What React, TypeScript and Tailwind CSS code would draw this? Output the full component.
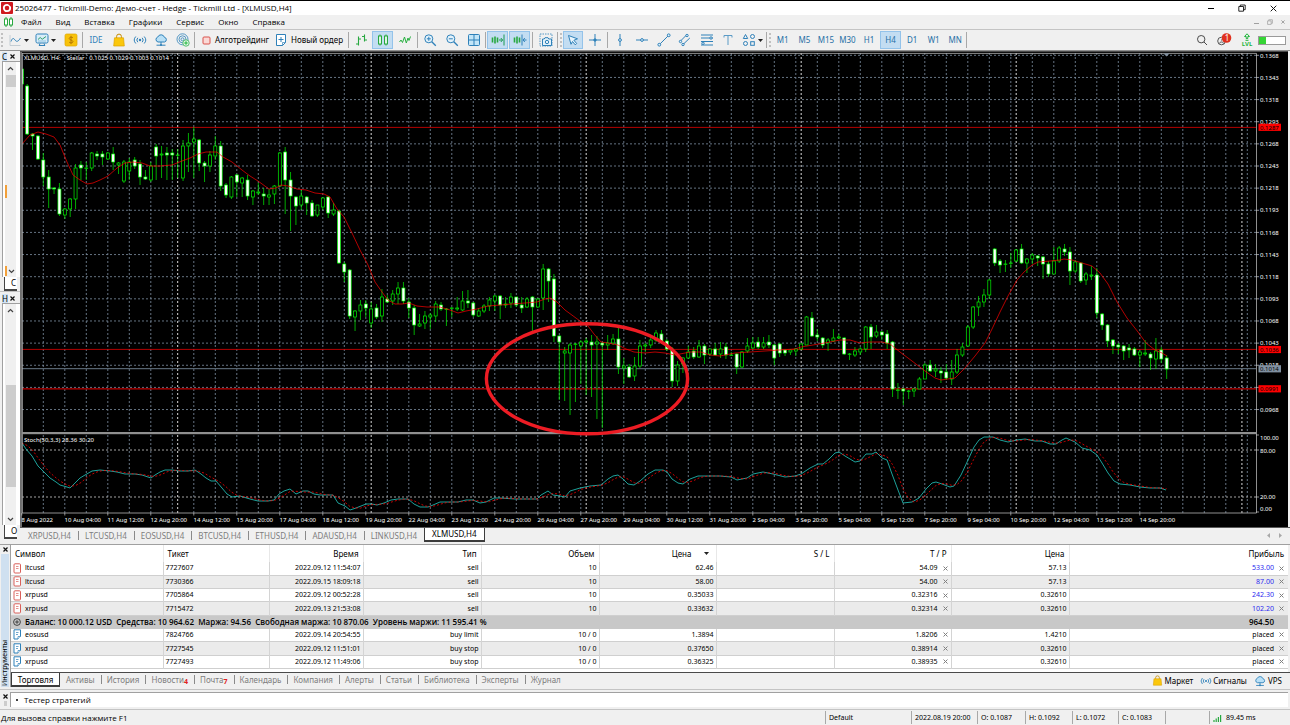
import type { ReactNode } from "react";

/* ---------- chart data ---------- */

type Kind = "w" | "h";
type Candle = [number, number, number, number, Kind];

// [high, body top, body bottom, low, kind] in plot units; w = falling, h = rising
const candles: Candle[] = [
  [69, 69, 84, 85, "w"], [84, 86, 134, 135, "w"], [133, 134, 136, 150, "w"], [135, 136, 159, 160, "w"],
  [153, 160, 177, 186, "w"], [170, 177, 189, 208, "w"], [187, 188, 189, 194, "w"], [183, 189, 214, 216, "w"],
  [208, 209, 215, 219, "h"], [198, 199, 209, 217, "h"], [164, 168, 199, 209, "h"], [161, 165, 168, 180, "w"],
  [162, 168, 168, 180, "h"], [152, 153, 168, 171, "h"], [151, 154, 156, 160, "w"], [151, 154, 157, 165, "w"],
  [152, 153, 159, 160, "h"], [147, 154, 162, 170, "w"], [162, 163, 165, 174, "h"], [160, 162, 181, 183, "h"],
  [158, 162, 171, 180, "h"], [157, 160, 166, 169, "w"], [160, 164, 177, 185, "w"], [170, 177, 179, 180, "w"],
  [162, 166, 180, 182, "h"], [144, 147, 156, 180, "w"], [146, 154, 155, 178, "h"], [147, 153, 155, 180, "w"],
  [149, 153, 155, 180, "w"], [149, 155, 155, 178, "h"], [140, 146, 178, 181, "h"], [133, 143, 146, 172, "h"],
  [127, 139, 142, 178, "h"], [139, 140, 163, 171, "w"], [161, 163, 166, 182, "w"], [151, 155, 166, 172, "h"],
  [136, 146, 156, 160, "h"], [141, 146, 186, 191, "w"], [183, 185, 195, 198, "w"], [176, 177, 197, 199, "h"],
  [174, 175, 182, 197, "w"], [177, 178, 183, 197, "h"], [175, 180, 196, 200, "w"], [190, 191, 197, 205, "h"],
  [183, 192, 193, 195, "h"], [188, 194, 196, 205, "w"], [189, 195, 197, 205, "h"], [185, 186, 194, 204, "h"],
  [152, 153, 186, 187, "h"], [147, 152, 180, 214, "w"], [172, 180, 196, 231, "w"], [196, 197, 206, 225, "w"],
  [190, 196, 205, 210, "h"], [196, 197, 203, 215, "w"], [200, 203, 216, 217, "w"], [205, 205, 215, 217, "h"],
  [197, 198, 207, 210, "h"], [196, 197, 213, 218, "w"], [203, 210, 214, 216, "h"], [210, 211, 263, 264, "w"],
  [262, 264, 272, 282, "w"], [269, 270, 316, 319, "w"], [310, 311, 317, 331, "h"], [300, 305, 311, 320, "h"],
  [300, 304, 308, 317, "w"], [302, 309, 323, 328, "h"], [304, 308, 317, 319, "w"], [289, 297, 316, 322, "h"],
  [295, 299, 302, 303, "w"], [290, 294, 301, 305, "h"], [282, 288, 294, 304, "h"], [282, 288, 301, 304, "w"],
  [298, 302, 308, 318, "w"], [305, 308, 325, 335, "w"], [314, 324, 326, 327, "h"], [311, 316, 323, 329, "h"],
  [313, 315, 317, 329, "h"], [301, 304, 316, 322, "h"], [302, 305, 309, 311, "w"], [308, 309, 309, 326, "h"],
  [307, 308, 308, 317, "h"], [297, 308, 309, 311, "h"], [291, 301, 310, 311, "h"], [290, 301, 303, 308, "w"],
  [302, 303, 315, 317, "w"], [308, 311, 316, 317, "h"], [304, 306, 311, 313, "h"], [297, 300, 306, 311, "h"],
  [295, 296, 301, 311, "h"], [295, 296, 305, 319, "w"], [297, 304, 305, 308, "h"], [293, 297, 303, 308, "h"],
  [297, 297, 305, 307, "w"], [297, 305, 308, 313, "w"], [297, 299, 307, 308, "h"], [296, 297, 307, 333, "w"],
  [298, 299, 307, 308, "h"], [264, 269, 298, 310, "h"], [268, 269, 281, 302, "w"], [274, 279, 336, 342, "w"],
  [335, 336, 342, 400, "w"], [347, 351, 353, 401, "h"], [343, 345, 353, 415, "h"], [343, 344, 344, 402, "h"],
  [340, 342, 346, 384, "h"], [338, 341, 342, 395, "h"], [335, 342, 345, 397, "w"], [336, 342, 344, 419, "h"],
  [342, 343, 345, 428, "w"], [335, 343, 345, 350, "h"], [334, 339, 343, 345, "h"], [328, 339, 367, 374, "w"],
  [358, 366, 368, 384, "h"], [364, 367, 377, 378, "w"], [357, 366, 376, 381, "h"], [340, 346, 366, 368, "h"],
  [343, 345, 346, 352, "h"], [335, 340, 345, 348, "h"], [330, 333, 340, 342, "h"], [330, 334, 342, 344, "w"],
  [339, 341, 349, 351, "w"], [347, 349, 381, 387, "w"], [361, 365, 381, 386, "h"], [357, 358, 364, 373, "h"],
  [346, 352, 358, 359, "h"], [347, 351, 357, 359, "w"], [340, 346, 357, 358, "h"], [344, 346, 355, 364, "w"],
  [348, 349, 354, 356, "h"], [343, 349, 355, 356, "w"], [342, 349, 354, 358, "h"], [343, 347, 355, 359, "w"],
  [352, 355, 355, 356, "h"], [353, 354, 367, 374, "w"], [351, 352, 367, 368, "h"], [338, 346, 351, 353, "h"],
  [337, 343, 348, 349, "h"], [337, 342, 347, 349, "w"], [337, 343, 347, 349, "h"], [335, 342, 345, 348, "w"],
  [344, 345, 358, 365, "w"], [343, 344, 353, 357, "w"], [349, 350, 353, 356, "w"], [349, 350, 352, 355, "h"],
  [348, 349, 351, 356, "h"], [343, 344, 349, 350, "h"], [316, 317, 345, 345, "h"], [312, 318, 336, 337, "w"],
  [329, 335, 337, 341, "w"], [337, 338, 345, 348, "w"], [338, 340, 343, 351, "h"], [329, 338, 341, 342, "h"],
  [334, 337, 338, 339, "h"], [337, 338, 354, 355, "w"], [353, 354, 354, 360, "h"], [347, 351, 355, 357, "h"],
  [347, 349, 352, 355, "h"], [326, 327, 349, 352, "h"], [324, 327, 337, 349, "w"], [325, 332, 336, 338, "h"],
  [331, 332, 335, 340, "w"], [330, 334, 343, 349, "w"], [341, 342, 389, 397, "w"], [383, 390, 390, 399, "h"],
  [388, 389, 391, 405, "w"], [390, 391, 391, 399, "h"], [388, 389, 391, 397, "h"], [377, 379, 389, 389, "h"],
  [363, 365, 379, 379, "h"], [360, 365, 371, 372, "w"], [364, 369, 371, 377, "h"], [367, 371, 373, 383, "w"],
  [364, 372, 378, 380, "w"], [360, 372, 379, 385, "h"], [349, 355, 372, 374, "h"], [343, 347, 355, 357, "h"],
  [325, 327, 346, 347, "h"], [306, 307, 327, 329, "h"], [296, 302, 307, 316, "h"], [289, 295, 302, 307, "h"],
  [279, 280, 295, 299, "h"], [248, 249, 263, 266, "w"], [259, 261, 265, 273, "w"], [260, 264, 264, 272, "h"],
  [253, 263, 263, 268, "h"], [249, 250, 261, 262, "h"], [244, 249, 263, 264, "w"], [258, 259, 263, 273, "h"],
  [253, 255, 259, 264, "h"], [255, 256, 258, 266, "w"], [256, 257, 264, 279, "w"], [261, 264, 274, 277, "w"],
  [247, 261, 274, 274, "h"], [246, 248, 261, 263, "h"], [244, 249, 252, 256, "w"], [247, 252, 271, 285, "w"],
  [260, 262, 271, 273, "h"], [262, 263, 281, 283, "w"], [272, 274, 280, 285, "h"], [266, 275, 276, 280, "h"],
  [268, 275, 313, 318, "w"], [313, 314, 325, 330, "w"], [324, 325, 341, 347, "w"], [339, 340, 346, 354, "w"],
  [343, 345, 347, 354, "w"], [345, 346, 351, 360, "w"], [344, 348, 350, 358, "w"], [347, 349, 355, 356, "w"],
  [350, 352, 355, 367, "h"], [340, 353, 354, 356, "h"], [352, 354, 358, 370, "w"], [338, 351, 359, 369, "h"],
  [347, 350, 359, 363, "w"], [355, 358, 369, 379, "w"],
];

type Point = [number, number];

const average: Point[] = [
  [22, 144], [30, 135], [38, 132], [46, 134], [54, 137], [60, 145], [67, 162], [73, 175], [80, 180], [87, 184], [93, 183],
  [100, 180], [108, 176], [117, 168], [125, 163], [133, 162], [142, 163], [150, 166], [160, 166], [172, 165], [182, 161],
  [190, 158], [198, 154], [206, 152], [217, 152], [223, 157], [232, 162], [242, 170], [250, 176], [258, 181], [269, 189],
  [276, 188], [281, 185], [288, 186], [297, 189], [306, 190], [315, 193], [324, 194], [330, 197], [337, 209], [344, 217],
  [352, 233], [360, 250], [368, 265], [375, 282], [382, 292], [388, 300], [395, 304], [402, 304], [409, 303], [417, 306],
  [427, 307], [440, 307], [450, 310], [458, 313], [466, 311], [477, 309], [488, 306], [500, 305], [512, 304], [525, 303],
  [537, 302], [545, 299], [550, 298], [557, 302], [565, 310], [580, 321], [588, 326], [594, 334], [601, 342], [608, 343],
  [618, 345], [626, 349], [634, 352], [645, 353], [655, 352], [665, 353], [675, 355], [690, 352], [701, 352], [710, 355],
  [720, 356], [735, 353], [750, 352], [765, 351], [780, 350], [795, 349], [801, 347], [813, 345], [830, 342], [840, 340],
  [850, 340], [860, 343], [870, 342], [882, 342], [890, 344], [900, 352], [912, 361], [925, 371], [935, 378], [941, 380],
  [948, 379], [955, 378], [965, 368], [975, 356], [985, 343], [992, 329], [1000, 312], [1008, 296], [1017, 280],
  [1024, 272], [1032, 265], [1038, 262], [1050, 261], [1060, 260], [1064, 259], [1072, 260], [1082, 263], [1092, 266],
  [1100, 273], [1108, 284], [1117, 302], [1127, 318], [1138, 332], [1146, 343], [1155, 350], [1162, 353], [1167, 356],
];

const stochastic: Point[] = [
  [22, 443], [26, 449], [32, 456], [38, 466], [44, 472], [50, 478], [56, 482], [60, 485], [67, 487], [70, 488], [74, 484],
  [80, 478], [85, 475], [92, 471], [100, 470], [110, 471], [117, 472], [125, 474], [135, 474], [142, 475], [151, 478],
  [155, 475], [160, 472], [165, 470], [172, 470], [180, 471], [188, 471], [195, 470], [201, 474], [206, 478], [211, 481],
  [216, 481], [222, 488], [227, 494], [232, 497], [240, 496], [250, 499], [258, 501], [268, 501], [274, 500], [279, 494],
  [284, 491], [290, 489], [296, 494], [303, 491], [308, 491], [314, 494], [320, 495], [333, 495], [338, 503], [345, 506],
  [350, 510], [356, 508], [366, 504], [372, 504], [377, 505], [384, 503], [391, 500], [398, 499], [408, 499], [414, 504],
  [420, 507], [428, 507], [433, 505], [440, 502], [450, 502], [458, 502], [466, 500], [473, 500], [480, 503], [486, 502],
  [494, 498], [500, 498], [515, 499], [537, 499], [541, 495], [548, 491], [553, 495], [560, 496], [565, 497], [570, 491],
  [580, 488], [590, 486], [601, 485], [608, 479], [613, 476], [618, 475], [623, 479], [628, 484], [634, 485], [640, 481],
  [648, 474], [655, 470], [663, 470], [667, 472], [672, 479], [678, 483], [683, 484], [690, 479], [698, 476], [712, 476],
  [720, 476], [731, 477], [737, 480], [747, 478], [753, 474], [763, 472], [773, 474], [785, 477], [795, 476], [801, 474],
  [810, 468], [818, 464], [823, 464], [829, 459], [835, 453], [839, 452], [845, 456], [855, 462], [860, 461], [866, 454],
  [872, 454], [876, 452], [882, 458], [887, 460], [892, 474], [898, 490], [903, 503], [912, 502], [919, 498], [926, 489],
  [932, 483], [936, 482], [942, 484], [950, 487], [954, 486], [961, 475], [968, 460], [974, 447], [979, 440], [984, 437],
  [993, 437], [1000, 440], [1008, 442], [1017, 440], [1025, 439], [1035, 441], [1042, 441], [1050, 444], [1056, 444],
  [1062, 440], [1066, 438], [1075, 442], [1082, 448], [1090, 450], [1097, 455], [1102, 463], [1108, 473], [1114, 481],
  [1120, 484], [1130, 485], [1140, 487], [1150, 488], [1160, 488], [1166, 490],
];

const STEP = 5.375;
const ORIGIN = 21.8;
const barX = (i: number) => ORIGIN + STEP * i;

function valueAt(points: Point[], x: number) {
  if (x <= points[0][0]) return points[0][1];
  for (let i = 1; i < points.length; i++) {
    const [x1, y1] = points[i];
    const [x0, y0] = points[i - 1];
    if (x <= x1) return y0 + ((y1 - y0) * (x - x0)) / (x1 - x0);
  }
  return points[points.length - 1][1];
}

// three-bar simple average of the main stochastic line
const signal: Point[] = candles.map((_, i) => {
  const at = (n: number) => valueAt(stochastic, barX(Math.max(0, n)));
  return [barX(i), (at(i) + at(i - 1) + at(i - 2)) / 3];
});

const toPath = (points: Point[]) => points.map((p) => p.join(",")).join(" ");

const priceLabels = [
  "0.1368", "0.1343", "0.1318", "0.1293", "0.1268", "0.1243", "0.1218", "0.1193", "0.1168",
  "0.1143", "0.1118", "0.1093", "0.1068", "0.1043", "0.1018", "0.0993", "0.0968",
];

const dateLabels = [
  "8 Aug 2022", "10 Aug 04:00", "11 Aug 12:00", "12 Aug 20:00", "14 Aug 12:00", "15 Aug 20:00", "17 Aug 04:00",
  "18 Aug 12:00", "19 Aug 20:00", "22 Aug 04:00", "23 Aug 12:00", "24 Aug 20:00", "26 Aug 04:00", "27 Aug 20:00",
  "29 Aug 04:00", "30 Aug 12:00", "31 Aug 20:00", "2 Sep 04:00", "3 Sep 20:00", "5 Sep 04:00", "6 Sep 12:00",
  "7 Sep 20:00", "9 Sep 04:00", "10 Sep 20:00", "12 Sep 04:00", "13 Sep 12:00", "14 Sep 20:00",
];

const priceMarks = [
  { y: 127.3, label: "0.1287", color: "#ff0000" },
  { y: 349.5, label: "0.1036", color: "#ff0000" },
  { y: 368.8, label: "0.1014", color: "#8090a0" },
  { y: 388.8, label: "0.0991", color: "#ff0000" },
];

const gridY = (k: number) => 55.3 + 22.14 * k;

function Chart() {
  return (
    <svg viewBox="20 51 1270 476" className="block h-auto w-full bg-black font-['Noto_Sans','Open_Sans',sans-serif] text-[6px]" role="img" aria-label="XLMUSD, H4">
      <g stroke="#778899" strokeWidth="0.85" strokeDasharray="2 2">
        {Array.from({ length: 57 }, (_, k) => (
          <path key={k} d={`M${barX(4 * k + 4)} 53V432M${barX(4 * k + 4)} 435V513`} />
        ))}
        {priceLabels.map((label, k) => (
          <path key={label} d={`M22 ${gridY(k)}H1256`} />
        ))}
      </g>
      <g stroke="#ffffff" strokeWidth="0.85" strokeDasharray="2 2">
        {[29, 65, 105, 145, 185, 227].map((i) => (
          <path key={i} d={`M${barX(i)} 53V432M${barX(i)} 435V513`} />
        ))}
        <path d="M22 450H1256M22 497H1256" stroke="#c0c0c0" />
      </g>
      <path d="M22 127.4H1256M22 349.4H1256" stroke="#e00000" strokeWidth="0.8" />
      <path d="M22 388.8H1256" stroke="#c00000" strokeWidth="1.2" />
      <path d="M22 368.7H1256" stroke="#778899" strokeWidth="0.9" />
      <g stroke="#00ff00" strokeWidth="0.67">
        {candles.map(([high, top, bottom, low, kind], i) => (
          <g key={i}>
            <path d={`M${barX(i)} ${high}V${low}`} />
            <rect x={barX(i) - 1.5} y={top} width="3" height={Math.max(bottom - top, 0.6)} fill={kind === "w" ? "#ffffff" : "#000000"} />
          </g>
        ))}
      </g>
      <polyline points={toPath(average)} fill="none" stroke="#ff0000" strokeWidth="0.7" />
      <polyline points={toPath(stochastic)} fill="none" stroke="#20b2aa" strokeWidth="0.9" />
      <polyline points={toPath(signal)} fill="none" stroke="#ff0000" strokeWidth="0.8" strokeDasharray="2 2" />
      <rect x="20" y="51" width="2" height="476" fill="#6e6e6e" />
      <rect x="20" y="51" width="1270" height="1" fill="#4a4a4a" />
      <rect x="1288" y="51" width="2" height="476" fill="#f0f0f0" />
      <path d="M22.4 53V513M22 53.4H1256.5V513H22" fill="none" stroke="#b4b4b4" strokeWidth="0.8" />
      <rect x="22" y="432" width="1235" height="2.2" fill="#909090" />
      <path d="M1163.5 53.5h6l-3 3z" fill="#8090a0" />
      <g stroke="#c8c8c8" strokeWidth="0.7">
        {priceLabels.map((label, k) => (
          <path key={label} d={`M1256 ${gridY(k)}h3`} />
        ))}
        {dateLabels.map((label, k) => (
          <path key={label} d={`M${barX(8 * k)} 513v2.5`} />
        ))}
        <path d="M1256 435h3M1256 450h3M1256 497h3M1256 512h3" />
      </g>
      <g fill="#ffffff">
        {priceLabels.map((label, k) => (
          <text key={label} x="1260" y={gridY(k) + 2.2}>{label}</text>
        ))}
        {dateLabels.map((label, k) => (
          <text key={label} x={barX(8 * k) - 0.3} y="521.5">{label}</text>
        ))}
        <text x="1260" y="439.5">100.00</text>
        <text x="1260" y="452.5">80.00</text>
        <text x="1260" y="499.3">20.00</text>
        <text x="1260" y="511.3">0.00</text>
        <text x="24" y="60">XLMUSD, H4:&#160;&#160;&#160; Stellar&#160;&#160; 0.1025 0.1029 0.1003 0.1014</text>
        <text x="24" y="442.3">Stoch(50,3,3) 28.36 30.20</text>
      </g>
      {priceMarks.map((mark) => (
        <g key={mark.label}>
          <rect x="1258.5" y={mark.y - 3.6} width="22.5" height="7.2" fill={mark.color} />
          <text x="1260" y={mark.y + 2.2} fill="#000000">{mark.label}</text>
        </g>
      ))}
      <ellipse cx="587" cy="378.8" rx="100.6" ry="55" fill="none" stroke="#ed1c24" strokeWidth="3.4" />
    </svg>
  );
}

/* ---------- icons ---------- */

function Svg({ children, size = "h-[14px] w-[14px]", box = "0 0 14 14" }: { children: ReactNode; size?: string; box?: string }) {
  return (
    <svg viewBox={box} className={`${size} shrink-0`} fill="none" stroke="#2f81b9" strokeWidth="1" aria-hidden="true">
      {children}
    </svg>
  );
}

const LineIcon = () => (
  <Svg>
    <path d="M2 2v10.5h10.5" stroke="#b9c4cc" strokeWidth="0.8" />
    <path d="M3 8.5C4.5 4.5 5.5 5 7 7s3 2 5.5-2" />
  </Svg>
);
const MonitorIcon = () => (
  <Svg>
    <rect x="1" y="1" width="12" height="9" rx="1.5" fill="#d9edf8" />
    <path d="M3 6.5l2.2-2 2 1.8L11 3.5" stroke="#2e9e6a" />
    <path d="M3 8h8" stroke="#8fc3e0" />
    <path d="M4 12.5h6M5 10.5l-.8 2M9 10.5l.8 2" />
  </Svg>
);
const CoinIcon = () => (
  <Svg>
    <rect x="1" y="1" width="12" height="12" rx="1.5" fill="#f8c20a" stroke="#e0a800" strokeWidth="0.7" />
    <path d="M9 4.8C8.4 4 5.2 3.8 5.2 5.5S9 7 9 8.700S5.500 10 5 9M7 2.800v8.400" stroke="#b07200" strokeWidth="0.9" />
  </Svg>
);
const BagIcon = ({ size }: { size?: string }) => (
  <Svg size={size}>
    <path d="M4.600 5V3.500a2.400 2.400 0 014.800 0V5" stroke="#c48a00" />
    <path d="M2.500 4.800h9L12.300 13H1.700z" fill="#fbc70c" stroke="#dba200" strokeWidth="0.7" />
  </Svg>
);
const SignalIcon = ({ size }: { size?: string }) => (
  <Svg size={size}>
    <circle cx="7" cy="7" r="1.200" fill="#2f81b9" stroke="none" />
    <path d="M4.800 4.800a3.200 3.200 0 000 4.400M9.200 4.800a3.200 3.200 0 010 4.400M2.800 3.500a5.200 5.200 0 000 7M11.200 3.500a5.200 5.200 0 010 7" />
  </Svg>
);
const CloudIcon = ({ size }: { size?: string }) => (
  <Svg size={size}>
    <path d="M4 9a2.600 2.600 0 01-.2-5A3.500 3.500 0 0110.400 4.300 2.400 2.400 0 0110.500 9z" fill="#b9e0f6" />
    <path d="M7 9v3M2.500 12.200h9" />
    <circle cx="7" cy="12" r="1" fill="#2f81b9" stroke="none" />
  </Svg>
);
const TargetIcon = () => (
  <Svg>
    <circle cx="6.500" cy="6.300" r="5.500" strokeWidth="0.800" />
    <circle cx="6.500" cy="6.300" r="3.500" strokeWidth="0.800" />
    <circle cx="6.500" cy="6.300" r="1.500" strokeWidth="0.800" />
    <circle cx="10" cy="10" r="3.200" fill="#e9faec" stroke="#2fae4b" strokeWidth="0.800" />
    <path d="M8.200 10h3.600M10 8.200v3.600" stroke="#1fb43c" />
  </Svg>
);
const StopIcon = () => (
  <Svg size="h-[9px] w-[9px]" box="0 0 9 9">
    <rect x="1" y="1" width="7" height="7" rx="1" fill="#fbd9d6" stroke="#d9534c" />
  </Svg>
);
const OrderIcon = () => (
  <Svg>
    <path d="M2.500 1.500h9v8l-3 3h-6z" fill="#ffffff" />
    <path d="M7 4v5M4.500 6.500h5" />
    <path d="M8.500 12.500v-3h3" strokeWidth="0.700" />
  </Svg>
);
const BarsIcon = () => (
  <Svg>
    <path d="M4.500 3.500v9M2 11h2.500M4.500 6H7M10.500 1.500v7M8 3.500h2.500M10.500 7H13" stroke="#27a83f" strokeWidth="1.100" />
  </Svg>
);
const CandlesIcon = () => (
  <Svg>
    <path d="M4 1.500v11M10 1.500v11" stroke="#27a83f" />
    <rect x="2.500" y="3" width="3" height="8" fill="#dff5e3" stroke="#27a83f" />
    <rect x="8.500" y="3" width="3" height="8" fill="#dff5e3" stroke="#27a83f" />
  </Svg>
);
const ZigzagIcon = () => (
  <Svg>
    <path d="M1.500 9l1.500-2 1.500 2.500L6.500 4l1.800 6L10 5l1 2.500L12.500 3.500" stroke="#27b040" />
  </Svg>
);
const ZoomIcon = ({ plus }: { plus?: boolean }) => (
  <Svg>
    <circle cx="5.800" cy="5.800" r="4" fill="#e3f2fb" />
    <path d="M8.800 8.800l4 4" strokeWidth="1.300" />
    <path d={plus ? "M3.800 5.800h4M5.800 3.800v4" : "M3.800 5.800h4"} />
  </Svg>
);
const TilesIcon = () => (
  <Svg>
    <rect x="1.500" y="1.500" width="11" height="11" rx="1" fill="#c4e6f8" />
    <path d="M7 1.500v11M1.500 7h11" />
  </Svg>
);
const ScrollIcon = ({ shift }: { shift?: boolean }) => (
  <Svg>
    <path d="M1.500 4.500v5M4 3.500v7M6.500 4.500v5" stroke="#27a83f" strokeWidth="1.600" />
    {shift ? <path d="M9 1.500v11M13.500 7H10M11.800 5L10 7l1.800 2" /> : <path d="M13 1.500v11M8 7h3.500M9.800 5l1.800 2-1.800 2" stroke="#1c9a52" />}
  </Svg>
);
const CameraIcon = () => (
  <Svg>
    <rect x="1" y="1" width="12" height="12" strokeDasharray="1.500 1" strokeWidth="0.800" />
    <path d="M3.500 6h1.700l.8-1.300h3L9.800 6h2.700v6.500h-9z" fill="#e3f2fb" />
    <circle cx="8" cy="9" r="1.700" />
  </Svg>
);
const CursorIcon = () => (
  <Svg>
    <path d="M2.500 2.500l9 3.300-3.600 1.500 2.800 3.200-1.500 1.300-2.700-3.300-1.500 2.800z" fill="#e8f5fd" />
  </Svg>
);
const CrossIcon = () => (
  <Svg>
    <path d="M7 1v12M1 7h12" />
    <path d="M5.500 7h3M7 5.500v3" strokeWidth="2" />
  </Svg>
);
const VLineIcon = () => (
  <Svg>
    <path d="M7 1v12" />
    <circle cx="7" cy="7" r="1.400" fill="#e3f2fb" />
  </Svg>
);
const HLineIcon = () => (
  <Svg>
    <path d="M1 7h12" />
    <circle cx="7" cy="7" r="1.400" fill="#e3f2fb" />
  </Svg>
);
const TrendIcon = () => (
  <Svg>
    <path d="M2.800 11.200l8.400-8.400" />
    <circle cx="2.300" cy="11.700" r="1.400" fill="#e3f2fb" />
    <circle cx="11.700" cy="2.300" r="1.400" fill="#e3f2fb" />
  </Svg>
);
const ChannelIcon = () => (
  <Svg>
    <path d="M2 8.500L8.500 2M5 11.500L11.800 5" />
    <circle cx="9" cy="2.500" r="1.200" fill="#e3f2fb" />
    <circle cx="2.500" cy="8.500" r="1.200" fill="#e3f2fb" />
    <circle cx="5" cy="11.500" r="1.200" fill="#e3f2fb" />
  </Svg>
);
const LevelsIcon = () => (
  <Svg>
    <path d="M1 2h12M1 5h12M1 8.500h12M1 12h12" />
    <circle cx="11" cy="5" r="1.200" fill="#e3f2fb" />
    <circle cx="3" cy="10.300" r="1.200" fill="#e3f2fb" />
  </Svg>
);
const LetterIcon = () => (
  <Svg>
    <path d="M3 4.500V2.500h8v2M7 2.500V12" stroke="#5b9bc6" />
  </Svg>
);
const ShapesIcon = () => (
  <Svg>
    <path d="M3.500 1.500l2.200 4H1.300z" />
    <circle cx="10.500" cy="3.500" r="2" />
    <circle cx="3.500" cy="10.500" r="2" />
    <rect x="8.700" y="8.700" width="3.600" height="3.600" />
  </Svg>
);
const SearchIcon = () => (
  <Svg>
    <circle cx="6.200" cy="6.200" r="3.700" stroke="#4a4a4a" />
    <path d="M9 9l3 3" stroke="#4a4a4a" />
  </Svg>
);
const UserIcon = () => (
  <Svg size="h-[14px] w-[18px]" box="0 0 18 14">
    <circle cx="6.500" cy="8" r="3.800" stroke="#555555" />
    <path d="M4.500 10.500c0-2 4-2 4 0M6.500 6.500v1" stroke="#555555" />
    <circle cx="11.500" cy="5" r="4.800" fill="#e0301e" stroke="none" />
    <text x="9.700" y="7.700" fontSize="8" fill="#ffffff" stroke="none">1</text>
  </Svg>
);
const Caret = () => (
  <svg viewBox="0 0 5 3" className="h-[3px] w-[5px] shrink-0" aria-hidden="true">
    <path d="M0 0h5L2.500 3z" fill="#222222" />
  </svg>
);
const Chevron = ({ down }: { down?: boolean }) => (
  <svg viewBox="0 0 7 5" className="h-[5px] w-[7px]" fill="none" stroke="#444444" strokeWidth="1.200" aria-hidden="true">
    <path d={down ? "M1 1l2.500 2.500L6 1" : "M1 4l2.500-2.500L6 4"} />
  </svg>
);
const Cross = ({ color = "#111111", size = "h-[5px] w-[5px]", weight = "1.2" }: { color?: string; size?: string; weight?: string }) => (
  <svg viewBox="0 0 5 5" className={size} stroke={color} strokeWidth={weight} aria-hidden="true">
    <path d="M.5 .5l4 4M4.500 .5l-4 4" />
  </svg>
);
const DocIcon = ({ sell }: { sell?: boolean }) => (
  <svg viewBox="0 0 9 11" className="h-[11px] w-[9px] shrink-0" fill="#ffffff" stroke={sell ? "#d9605a" : "#2f81b9"} aria-hidden="true">
    {sell ? <rect x="1" y="0.800" width="6.500" height="9.200" rx="1" /> : <path d="M1 .8h6.500v6.400L5 10H1z" />}
    <path d={sell ? "M3 3.500h2.500M3 5.500h2.500" : "M3 3.500h2.500M3 5.500h2M5 10V7.500h2.500"} strokeWidth="0.700" />
  </svg>
);

/* ---------- toolbar ---------- */

const Sep = () => <span className="my-px w-[2px] shrink-0 border-l border-[#a8a8a8]" />;
const Grip = () => <span className="my-[2px] ml-px w-[3px] shrink-0 border-l-2 border-dotted border-[#c0c0c0]" />;

function Tool({ label, width = "w-[22px]", active, children }: { label: string; width?: string; active?: boolean; children: ReactNode }) {
  return (
    <button
      type="button"
      aria-label={label}
      aria-pressed={active}
      className={`flex shrink-0 items-center justify-center gap-[2px] border ${width} ${active ? "border-[#94c3ea] bg-[#c3ddf2]" : "border-transparent"}`}
    >
      {children}
    </button>
  );
}

const timeframes = ["M1", "M5", "M15", "M30", "H1", "H4", "D1", "W1", "MN"];

function Toolbar() {
  return (
    <div className="flex h-[22px] shrink-0 items-stretch border-y border-t-[#c4c4c4] border-b-[#909090] bg-[#f0f0f0] py-px">
      <Grip />
      <Tool label="Линия" width="w-[28px]"><LineIcon /><Caret /></Tool>
      <Tool label="Шаблоны" width="w-[27px]"><MonitorIcon /><Caret /></Tool>
      <Tool label="Символы" width="w-[23px]"><CoinIcon /></Tool>
      <Sep />
      <Tool label="IDE" width="w-[24px]"><span className="text-[8px] text-[#2f81b9]">IDE</span></Tool>
      <Tool label="Маркет" width="w-[21px]"><BagIcon /></Tool>
      <Tool label="Сигналы" width="w-[21px]"><SignalIcon /></Tool>
      <Tool label="VPS" width="w-[22px]"><CloudIcon /></Tool>
      <Tool label="Копирование"><TargetIcon /></Tool>
      <Sep />
      <button type="button" className="flex w-[77px] shrink-0 items-center gap-[4px] pl-[6px] text-[8px]"><StopIcon />Алготрейдинг</button>
      <button type="button" className="flex w-[75px] shrink-0 items-center gap-[3px] pl-px text-[8px]"><OrderIcon />Новый ордер</button>
      <Sep />
      <Tool label="Бары"><BarsIcon /></Tool>
      <Tool label="Свечи" width="w-[21px]" active><CandlesIcon /></Tool>
      <Tool label="Линейный график" width="w-[24px]"><ZigzagIcon /></Tool>
      <Sep />
      <Tool label="Увеличить"><ZoomIcon plus /></Tool>
      <Tool label="Уменьшить"><ZoomIcon /></Tool>
      <Tool label="Плитка"><TilesIcon /></Tool>
      <Sep />
      <Tool label="Автопрокрутка" width="w-[21px]" active><ScrollIcon /></Tool>
      <span className="w-px" />
      <Tool label="Сдвиг графика" width="w-[21px]" active><ScrollIcon shift /></Tool>
      <span className="w-[2px]" />
      <Sep />
      <Tool label="Снимок" width="w-[23px]"><CameraIcon /></Tool>
      <Sep />
      <Grip />
      <Tool label="Курсор" width="w-[20px]" active><CursorIcon /></Tool>
      <Tool label="Перекрестие" width="w-[24px]"><CrossIcon /></Tool>
      <Sep />
      <Tool label="Вертикальная линия"><VLineIcon /></Tool>
      <Tool label="Горизонтальная линия"><HLineIcon /></Tool>
      <Tool label="Трендовая линия" width="w-[21px]"><TrendIcon /></Tool>
      <Tool label="Канал"><ChannelIcon /></Tool>
      <Tool label="Уровни" width="w-[21px]"><LevelsIcon /></Tool>
      <Tool label="Текст" width="w-[21px]"><LetterIcon /></Tool>
      <Tool label="Объекты" width="w-[28px]"><ShapesIcon /><Caret /></Tool>
      <Sep />
      <Grip />
      <div className="grid w-[194px] shrink-0 grid-cols-9 text-[8px] text-[#1f6fa5]">
        {timeframes.map((frame) => (
          <button
            key={frame}
            type="button"
            className={`border text-center leading-none ${frame === "H4" ? "border-[#94c3ea] bg-[#c3ddf2]" : "border-transparent"}`}
          >
            {frame}
          </button>
        ))}
      </div>
      <Sep />
      <div className="ml-auto flex items-center gap-[4px] pr-[4px]">
        <button type="button" aria-label="Поиск" className="mr-[2px]"><SearchIcon /></button>
        <button type="button" aria-label="Уведомления" className="mr-[3px]"><UserIcon /></button>
        <span className="flex w-[14px] flex-col items-center text-[6px] leading-[6px] font-bold text-[#22b53c]">
          <svg viewBox="0 0 8 8" className="h-[8px] w-[8px]" fill="none" stroke="#22b53c" aria-hidden="true">
            <path d="M4 .8l2.500 2.700H4.800v2H3.200v-2H1.500zM2.500 7.300h3" />
          </svg>
          LVL
        </span>
        <span className="flex h-[9px] w-[28px] border border-[#9a9a9a] bg-white" aria-hidden="true">
          <span className="w-[7px] bg-[#35d435]" />
        </span>
      </div>
    </div>
  );
}

/* ---------- side panel ---------- */

function SidePane({ title, tab, grow, children }: { title: string; tab: string; grow?: boolean; children: ReactNode }) {
  return (
    <section className={`flex flex-col ${grow ? "min-h-0 flex-1 pb-[5px]" : "h-[240px] shrink-0"}`}>
      <header className="flex h-[10px] shrink-0 items-center pl-[2px]">
        <span className="bg-[#cfe2f5] text-[8px] leading-[9px]">{title}</span>
        <button type="button" aria-label="Закрыть" className="ml-auto pr-[5px]"><Cross /></button>
      </header>
      <div className="ml-[2px] flex min-h-0 flex-1 flex-col border-t border-l border-[#a0a0a0] bg-white">
        <div className="ml-[2px] flex min-h-0 w-[11px] flex-1 flex-col items-center bg-[#f0f0f0]">{children}</div>
      </div>
      <div className="ml-[4px] h-[14px] w-[13px] shrink-0 border-b-2 border-l border-[#444444] bg-white pl-[6px] text-[8px] leading-[12px]">{tab}</div>
    </section>
  );
}

function SidePanel() {
  return (
    <aside className="flex w-[20px] shrink-0 flex-col bg-[#f0f0f0]">
      <SidePane title="С" tab="C">
        <span className="flex h-[13px] items-center"><Chevron /></span>
        <span className="h-[12px] w-[10px] bg-[#cdcdcd]" />
        <span className="mt-[98px] h-[13px] w-[2px] self-start bg-[#f2a03a]" />
        <span className="mt-auto flex h-[12px] w-full items-center gap-px"><span className="h-[10px] w-[2px] bg-[#f2a03a]" /><Chevron down /></span>
      </SidePane>
      <span className="mb-px h-px bg-[#c0c0c0]" />
      <SidePane title="Н" tab="O" grow>
        <span className="flex h-[13px] items-center"><Chevron /></span>
        <span className="mt-[68px] h-[102px] w-[10px] bg-[#cdcdcd]" />
        <span className="mt-auto flex h-[12px] items-center"><Chevron down /></span>
      </SidePane>
    </aside>
  );
}

/* ---------- chart tabs ---------- */

const chartTabs = ["XRPUSD,H4", "LTCUSD,H4", "EOSUSD,H4", "BTCUSD,H4", "ETHUSD,H4", "ADAUSD,H4", "LINKUSD,H4"];

function ChartTabs() {
  return (
    <div className="flex h-[17px] shrink-0 items-start border-t border-[#5a5a5a] bg-[#f0f0f0] pl-[2px] text-[8px] text-[#7d7d7d]">
      <div className="flex h-[14px] items-center">
        {chartTabs.map((tab, i) => (
          <button key={tab} type="button" className={`h-[9px] pr-[7px] pl-[6px] leading-[9px] ${i < chartTabs.length - 1 ? "border-r border-[#8a8a8a]" : ""}`}>
            {tab}
          </button>
        ))}
      </div>
      <button type="button" className="h-[14px] border-x border-b-2 border-[#3c3c3c] bg-white px-[7px] leading-[12px] text-black">XLMUSD,H4</button>
      <div className="ml-auto flex h-[14px] items-center gap-[9px] pr-[8px]">
        <svg viewBox="0 0 3 5" className="h-[5px] w-[3px]" fill="#a8a8a8" aria-hidden="true"><path d="M3 0v5L0 2.500z" /></svg>
        <svg viewBox="0 0 3 5" className="h-[5px] w-[3px]" fill="#a8a8a8" aria-hidden="true"><path d="M0 0v5l3-2.500z" /></svg>
      </div>
    </div>
  );
}

/* ---------- trade table ---------- */

type Row = { symbol: string; ticket: string; time: string; type: string; volume: string; open: string; tp: string; price: string; profit: string };

const positions: Row[] = [
  { symbol: "ltcusd", ticket: "7727607", time: "2022.09.12 11:54:07", type: "sell", volume: "10", open: "62.46", tp: "54.09", price: "57.13", profit: "533.00" },
  { symbol: "ltcusd", ticket: "7730366", time: "2022.09.15 18:09:18", type: "sell", volume: "10", open: "58.00", tp: "54.00", price: "57.13", profit: "87.00" },
  { symbol: "xrpusd", ticket: "7705864", time: "2022.09.12 00:52:28", type: "sell", volume: "10", open: "0.35033", tp: "0.32316", price: "0.32610", profit: "242.30" },
  { symbol: "xrpusd", ticket: "7715472", time: "2022.09.13 21:53:08", type: "sell", volume: "10", open: "0.33632", tp: "0.32314", price: "0.32610", profit: "102.20" },
];
const orders: Row[] = [
  { symbol: "eosusd", ticket: "7824766", time: "2022.09.14 20:54:55", type: "buy limit", volume: "10 / 0", open: "1.3894", tp: "1.8206", price: "1.4210", profit: "placed" },
  { symbol: "xrpusd", ticket: "7727545", time: "2022.09.12 11:51:01", type: "buy stop", volume: "10 / 0", open: "0.37650", tp: "0.38914", price: "0.32610", profit: "placed" },
  { symbol: "xrpusd", ticket: "7727493", time: "2022.09.12 11:49:06", type: "buy stop", volume: "10 / 0", open: "0.36325", tp: "0.38935", price: "0.32610", profit: "placed" },
];

const num = "border-r border-[#d4d4d4] pr-[2px] text-right";

function WithClose({ children }: { children: ReactNode }) {
  return (
    <span className="flex items-center justify-end gap-[5px] pr-px">
      {children}
      <button type="button" aria-label="Удалить"><Cross color="#808080" weight="1" /></button>
    </span>
  );
}

function TradeRow({ row, shaded, open }: { row: Row; shaded: boolean; open: boolean }) {
  return (
    <tr className={`h-[13px] border-b border-[#cfcfcf] ${shaded ? "bg-[#ebebeb]" : "bg-white"}`}>
      <td className="border-r border-[#d4d4d4] pl-[2px]">
        <span className="flex items-center gap-[3px]"><DocIcon sell={open} />{row.symbol}</span>
      </td>
      <td className="border-r border-[#d4d4d4] pl-[2px]">{row.ticket}</td>
      <td className={num}>{row.time}</td>
      <td className={num}>{row.type}</td>
      <td className={num}>{row.volume}</td>
      <td className={num}>{row.open}</td>
      <td className={num} />
      <td className={num}><WithClose>{row.tp}</WithClose></td>
      <td className={num}>{row.price}</td>
      <td className={`pr-[3px] text-right ${open ? "text-[#2a2af0]" : ""}`}><WithClose>{row.profit}</WithClose></td>
    </tr>
  );
}

const head = "border-r border-[#e8e8e8] pr-[4px] text-right font-normal";

function TradeTable() {
  return (
    <table className="h-[124px] w-full table-fixed border-collapse leading-[10px]">
      <colgroup>
        <col className="w-[152px]" /><col className="w-[106px]" /><col className="w-[94px]" /><col className="w-[118px]" />
        <col className="w-[118px]" /><col className="w-[117px]" /><col className="w-[118px]" /><col className="w-[117px]" />
        <col className="w-[118px]" /><col />
      </colgroup>
      <thead>
        <tr className="h-[17px] text-[8px]">
          <th className="border-r border-[#e8e8e8] pl-[4px] text-left font-normal">Символ</th>
          <th className="border-r border-[#e8e8e8] pl-[4px] text-left font-normal">Тикет</th>
          <th className={head}>Время</th>
          <th className={head}>Тип</th>
          <th className={head}>Объем</th>
          <th className={head}><span className="flex items-center justify-end gap-[12px] pr-[3px]">Цена<Caret /></span></th>
          <th className={head}>S / L</th>
          <th className={head}>T / P</th>
          <th className={head}>Цена</th>
          <th className="pr-[4px] text-right font-normal">Прибыль</th>
        </tr>
      </thead>
      <tbody>
        {positions.map((row, i) => <TradeRow key={row.ticket} row={row} shaded={i % 2 === 1} open />)}
        <tr className="h-[13px] bg-[#c8c8c8] font-['Open_Sans','Noto_Sans',sans-serif] text-[8px] font-semibold">
          <td colSpan={9} className="pl-[2px]">
            <span className="flex items-center gap-[4px]">
              <svg viewBox="0 0 8 8" className="h-[8px] w-[8px]" fill="none" stroke="#333333" strokeWidth="0.900" aria-hidden="true">
                <circle cx="4" cy="4" r="3.400" /><path d="M2.200 4h3.600M4 2.200v3.600" />
              </svg>
              <span className="whitespace-pre">Баланс: 10 000.12 USD  Средства: 10 964.62  Маржа: 94.56  Свободная маржа: 10 870.06  Уровень маржи: 11 595.41 %</span>
            </span>
          </td>
          <td className="pr-[14px] text-right">964.50</td>
        </tr>
        {orders.map((row, i) => <TradeRow key={row.ticket} row={row} shaded={i % 2 === 1} open={false} />)}
      </tbody>
    </table>
  );
}

const toolTabs: { name: string; count?: string }[] = [
  { name: "Активы" }, { name: "История" }, { name: "Новости", count: "4" }, { name: "Почта", count: "7" }, { name: "Календарь" },
  { name: "Компания" }, { name: "Алерты" }, { name: "Статьи" }, { name: "Библиотека" }, { name: "Эксперты" }, { name: "Журнал" },
];

function Toolbox() {
  return (
    <section className="flex shrink-0 border-t border-[#a0a0a0] bg-[#f0f0f0] pb-[2px]">
      <div className="flex w-[10px] shrink-0 flex-col items-center">
        <button type="button" aria-label="Закрыть" className="py-[2px]"><Cross /></button>
        <div className="flex w-[8px] flex-1 items-end bg-[#cfe0f0] pb-px">
          <span className="h-[47px] w-[8px] rotate-180 text-[7px] leading-[8px] whitespace-nowrap [writing-mode:vertical-rl]">Инструменты</span>
        </div>
      </div>
      <div className="min-w-0 flex-1 border-l border-[#a0a0a0]">
        <div className="mr-[2px] bg-white pb-[3px]"><TradeTable /></div>
        <div className="flex h-[15px] items-start border-t border-[#4a4a4a] text-[8px] text-[#7d7d7d]">
          <button type="button" className="h-[14px] w-[49px] shrink-0 border-x border-b-2 border-[#3c3c3c] bg-white leading-[11px] text-black">Торговля</button>
          <div className="flex h-[13px] items-center pl-px">
            {toolTabs.map((tab, i) => (
              <button key={tab.name} type="button" className={`flex h-[9px] items-center pr-[6px] pl-[5px] leading-[9px] ${i < toolTabs.length - 1 ? "border-r border-[#8a8a8a]" : ""}`}>
                {tab.name}
                {tab.count && <span className="self-end text-[7px] leading-[4px] font-bold text-[#e02020]">{tab.count}</span>}
              </button>
            ))}
          </div>
          <div className="ml-auto flex h-[15px] items-center gap-[7px] pr-[8px] text-black">
            <a href="#market" className="flex items-center gap-[2px]"><BagIcon size="h-[11px] w-[11px]" />Маркет</a>
            <a href="#signals" className="flex items-center gap-px"><SignalIcon size="h-[12px] w-[12px]" />Сигналы</a>
            <a href="#vps" className="flex items-center gap-[2px]"><CloudIcon size="h-[12px] w-[12px]" />VPS</a>
          </div>
        </div>
      </div>
    </section>
  );
}

/* ---------- frame ---------- */

const menu = ["Файл", "Вид", "Вставка", "Графики", "Сервис", "Окно", "Справка"];

function StatusCell({ width, children }: { width: string; children?: ReactNode }) {
  return <span className={`flex h-[13px] items-center gap-[4px] border-l border-[#a8a8a8] pl-[3px] ${width}`}>{children}</span>;
}

export default function App() {
  return (
    <div className="flex min-h-screen flex-col bg-[#f0f0f0] font-['Noto_Sans','Open_Sans',sans-serif] text-[7px] leading-[10px] text-black">
      <header className="flex h-[15px] shrink-0 items-center border-t border-black bg-white pl-px text-[8px]">
        <svg viewBox="0 0 12 12" className="h-[12px] w-[12px]" aria-hidden="true">
          <rect width="12" height="12" rx="1" fill="#cf1a20" />
          <circle cx="6" cy="6" r="3.200" fill="none" stroke="#ffffff" strokeWidth="1.800" />
          <path d="M7 1l3 3" stroke="#cf1a20" strokeWidth="1.200" />
        </svg>
        <h1 className="ml-[2px] font-['Open_Sans','Noto_Sans',sans-serif]">25026477 - Tickmill-Demo: Демо-счет - Hedge - Tickmill Ltd - [XLMUSD,H4]</h1>
        <div className="ml-auto flex items-center gap-[24px] pr-[13px]">
          <button type="button" aria-label="Свернуть" className="h-px w-[6px] bg-black" />
          <button type="button" aria-label="Восстановить">
            <svg viewBox="0 0 8 8" className="h-[8px] w-[8px]" fill="none" stroke="#111111" strokeWidth="0.900"><path d="M.8 2.500h4.700v4.700H.8zM2.300 2.500V1h4.900v4.700H5.500" /></svg>
          </button>
          <button type="button" aria-label="Закрыть"><Cross size="h-[7px] w-[7px]" weight="0.7" /></button>
        </div>
      </header>
      <nav className="flex h-[14px] shrink-0 items-center pl-[3px] text-[8px]">
        <svg viewBox="0 0 11 10" className="mr-[7px] h-[10px] w-[11px]" fill="none" stroke="#27a83f" aria-hidden="true">
          <path d="M3 0v10M8 0v10" /><rect x="1.500" y="2" width="3" height="6" fill="#ffffff" /><rect x="6.500" y="2" width="3" height="6" fill="#ffffff" />
        </svg>
        <div className="flex gap-[14px] font-['Open_Sans','Noto_Sans',sans-serif]">
          {menu.map((item) => <button key={item} type="button">{item}</button>)}
        </div>
        <div className="ml-auto flex items-center gap-[8px] pr-[5px]">
          <button type="button" aria-label="Свернуть окно" className="mt-[3px] h-px w-[5px] bg-[#a0a0a0]" />
          <button type="button" aria-label="Восстановить окно">
            <svg viewBox="0 0 8 8" className="h-[6px] w-[6px]" fill="none" stroke="#a0a0a0"><path d="M.8 2.500h4.700v4.700H.8zM2.300 2.500V1h4.900v4.700H5.500" /></svg>
          </button>
          <button type="button" aria-label="Закрыть окно"><Cross color="#a0a0a0" size="h-[4px] w-[4px]" /></button>
        </div>
      </nav>
      <Toolbar />
      <main className="flex">
        <SidePanel />
        <div className="min-w-0 flex-1">
          <Chart />
          <ChartTabs />
        </div>
      </main>
      <Toolbox />
      <section className="flex h-[20px] shrink-0 border-t border-[#c4c4c4] pt-[2px] pb-[2px]">
        <div className="flex w-[10px] shrink-0 flex-col items-center gap-[2px] pt-[2px]">
          <button type="button" aria-label="Закрыть"><Cross /></button>
          <span className="h-[5px] w-[3px] bg-[#cccccc]" />
        </div>
        <div className="mr-[2px] flex flex-1 items-center gap-[6px] border-t border-l border-[#a0a0a0] bg-white pl-[5px] text-[8px]">
          <span className="h-[2px] w-[2px] rounded-full bg-black" />
          <span className="font-['Open_Sans','Noto_Sans',sans-serif]">Тестер стратегий</span>
        </div>
      </section>
      <footer className="flex h-[16px] shrink-0 items-center border-t border-[#c4c4c4]">
        <span className="flex-1 pl-px font-['Open_Sans','Noto_Sans',sans-serif] text-[8px]">Для вызова справки нажмите F1</span>
        <StatusCell width="w-[86px]">Default</StatusCell>
        <StatusCell width="w-[66px]">2022.08.19 20:00</StatusCell>
        <StatusCell width="w-[48px]">O: 0.1087</StatusCell>
        <StatusCell width="w-[47px]">H: 0.1092</StatusCell>
        <StatusCell width="w-[46px]">L: 0.1072</StatusCell>
        <StatusCell width="w-[47px]">C: 0.1083</StatusCell>
        <StatusCell width="w-[44px]" />
        <StatusCell width="w-[81px]">
          <svg viewBox="0 0 9 8" className="h-[8px] w-[9px]" stroke="#27a83f" strokeWidth="1.200" aria-hidden="true"><path d="M1 8V6M3.200 8V4.500M5.400 8V3M7.600 8V1" /></svg>
          89.45 ms
        </StatusCell>
      </footer>
    </div>
  );
}
